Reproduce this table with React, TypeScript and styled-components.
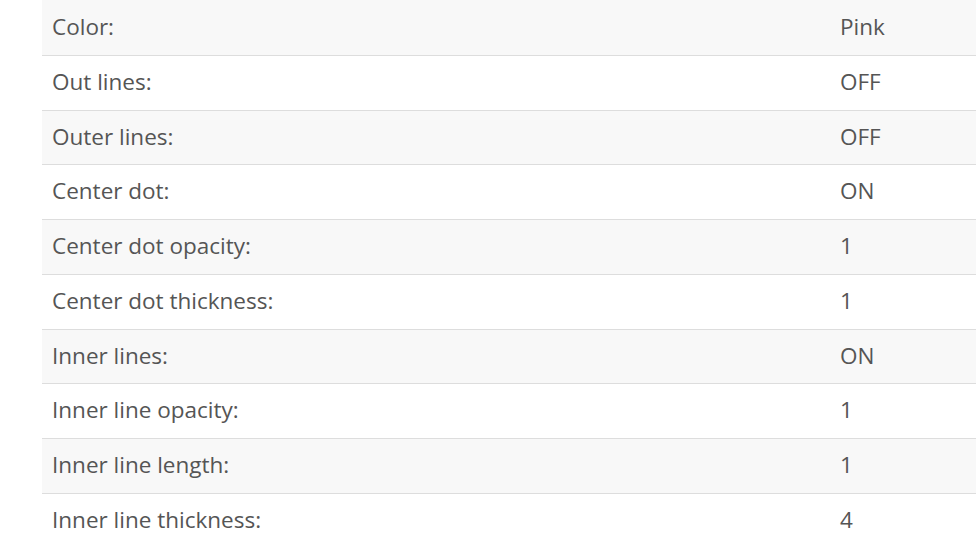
import React from "react";
import styled, { createGlobalStyle } from "styled-components";

const Global = createGlobalStyle`
  html, body { margin: 0; padding: 0; background: #ffffff; }
  body { font-family: "Open Sans", "Noto Sans", sans-serif; }
`;

const Page = styled.div`
  padding-left: 42px;
  width: 976px;
  box-sizing: border-box;
  overflow: hidden;
`;

const Table = styled.table`
  width: 934px;
  border-collapse: collapse;
  table-layout: fixed;
  font-size: 22.5px;
  color: #555555;
`;

const Row = styled.tr<{ $striped: boolean }>`
  background: ${(p) => (p.$striped ? "#f8f8f8" : "#ffffff")};
`;

const Cell = styled.td<{ $value?: boolean; $last?: boolean; $first?: boolean }>`
  padding: ${(p) => (p.$first ? "10px" : "9px")} 10px 11px;
  line-height: 33.75px;
  text-align: left;
  vertical-align: middle;
  width: ${(p) => (p.$value ? "auto" : "768px")};
  border-bottom: ${(p) => (p.$last ? "none" : "1px solid #dddddd")};
`;

const rows: [string, string][] = [
  ["Color:", "Pink"],
  ["Out lines:", "OFF"],
  ["Outer lines:", "OFF"],
  ["Center dot:", "ON"],
  ["Center dot opacity:", "1"],
  ["Center dot thickness:", "1"],
  ["Inner lines:", "ON"],
  ["Inner line opacity:", "1"],
  ["Inner line length:", "1"],
  ["Inner line thickness:", "4"],
];

export default function App() {
  return (
    <>
      <Global />
      <Page>
        <Table>
          <tbody>
            {rows.map(([k, v], i) => {
              const first = i === 0;
              const last = i === rows.length - 1;
              return (
                <Row key={k} $striped={i % 2 === 0}>
                  <Cell $first={first} $last={last}>{k}</Cell>
                  <Cell $value $first={first} $last={last}>{v}</Cell>
                </Row>
              );
            })}
          </tbody>
        </Table>
      </Page>
    </>
  );
}
